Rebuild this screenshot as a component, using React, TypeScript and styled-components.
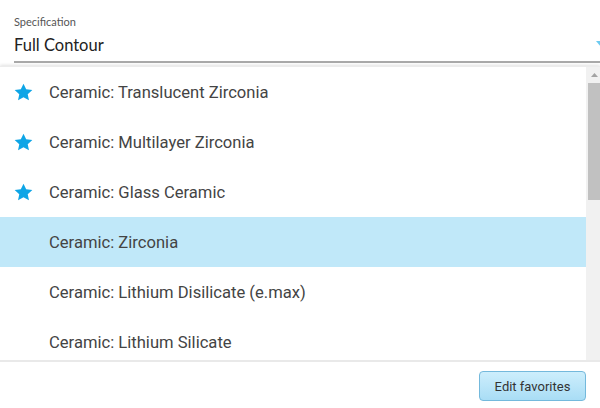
import React from "react";
import styled, { createGlobalStyle } from "styled-components";

const Global = createGlobalStyle`
  html, body { margin: 0; padding: 0; background: #fff; overflow: hidden; }
  body { width: 600px; height: 408px; font-family: Roboto, "Liberation Sans", sans-serif; }
  * { box-sizing: border-box; }
`;

const Page = styled.div`
  width: 600px;
  height: 408px;
  display: flex;
  flex-direction: column;
  overflow: hidden;
`;

const Field = styled.div`
  padding: 15px 0 0 14px;
  height: 66px;
`;

const Label = styled.div`
  font-family: Lato, "Noto Sans", sans-serif;
  font-size: 11px;
  line-height: 14px;
  color: #555;
`;

const ValueRow = styled.div`
  display: flex;
  align-items: center;
  height: 34px;
  border-bottom: 2px solid #a9a9a9;
`;

const Value = styled.div`
  flex: 1;
  font-family: Lato, "Noto Sans", sans-serif;
  font-size: 16.5px;
  color: #222;
`;

const Caret = styled.svg`
  flex: none;
  margin-right: -6px;
  margin-top: -2px;
`;

const Panel = styled.div`
  flex: 1;
  display: flex;
  flex-direction: column;
  box-shadow: 0 -1px 3px rgba(0, 0, 0, 0.12);
  border-top: 1px solid #ececec;
  min-height: 0;
`;

const ListArea = styled.div`
  height: 293px;
  display: flex;
  overflow: hidden;
`;

const List = styled.div`
  flex: 1;
  overflow: hidden;
`;

const Row = styled.div<{ $selected?: boolean }>`
  height: 50px;
  display: flex;
  align-items: center;
  background: ${(p) => (p.$selected ? "#c0e8f9" : "#fff")};
  font-size: 16.6px;
  color: #444;
`;

const StarSlot = styled.div`
  width: 49px;
  padding-left: 14px;
  display: flex;
  align-items: center;
`;

const Scrollbar = styled.div`
  width: 14px;
  background: #f1f1f1;
  display: flex;
  flex-direction: column;
  align-items: stretch;
`;

const ScrollArrow = styled.div`
  height: 16px;
  display: flex;
  align-items: center;
  justify-content: center;
  padding-left: 2px;
`;

const Thumb = styled.div`
  height: 117px;
  margin-left: 2px;
  background: #c1c1c1;
`;

const Footer = styled.div`
  border-top: 2px solid #e9e9e9;
  flex: 1;
  display: flex;
  justify-content: flex-end;
  align-items: flex-start;
  padding: 9px 14px 0 0;
`;

const Button = styled.button`
  width: 107px;
  height: 30px;
  border: 1px solid #74b9dc;
  border-radius: 4px;
  background: linear-gradient(#cdeefc, #a9ddf5);
  font-family: Roboto, "Liberation Sans", sans-serif;
  font-size: 13px;
  color: #333;
  padding: 0;
  cursor: pointer;
`;

const Star = () => (
  <svg width="19" height="18" viewBox="0 0 24 23">
    <path
      d="M12 0.8l3.4 7.2 7.9 0.9-5.9 5.4 1.6 7.8L12 18.2l-7 3.9 1.6-7.8L0.7 8.9l7.9-0.9z"
      fill="#0ea5e6"
    />
  </svg>
);

const items = [
  { name: "Ceramic: Translucent Zirconia", fav: true },
  { name: "Ceramic: Multilayer Zirconia", fav: true },
  { name: "Ceramic: Glass Ceramic", fav: true },
  { name: "Ceramic: Zirconia", selected: true },
  { name: "Ceramic: Lithium Disilicate (e.max)" },
  { name: "Ceramic: Lithium Silicate" },
];

export default function App() {
  return (
    <Page>
      <Global />
      <Field>
        <Label>Specification</Label>
        <ValueRow>
          <Value>Full Contour</Value>
          <Caret width="10" height="6" viewBox="0 0 10 6">
            <path d="M0 0h10L5 6z" fill="#6ccaf0" />
          </Caret>
        </ValueRow>
      </Field>
      <Panel>
        <ListArea>
          <List>
            {items.map((it) => (
              <Row key={it.name} $selected={it.selected}>
                <StarSlot>{it.fav && <Star />}</StarSlot>
                {it.name}
              </Row>
            ))}
          </List>
          <Scrollbar>
            <ScrollArrow>
              <svg width="7" height="4" viewBox="0 0 7 4">
                <path d="M0 4h7L3.5 0z" fill="#a3a3a3" />
              </svg>
            </ScrollArrow>
            <Thumb />
          </Scrollbar>
        </ListArea>
        <Footer>
          <Button>Edit favorites</Button>
        </Footer>
      </Panel>
    </Page>
  );
}
